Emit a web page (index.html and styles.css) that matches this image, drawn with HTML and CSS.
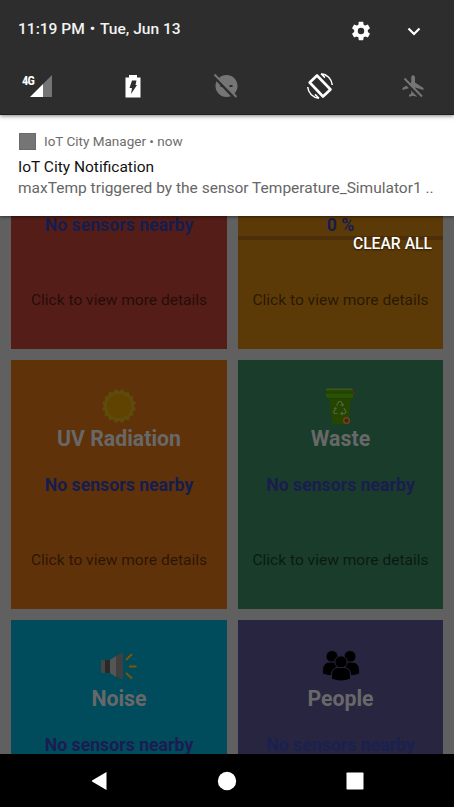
FILE: index.html
```html
<!DOCTYPE html>
<html lang="en">
<head>
<meta charset="utf-8">
<title>IoT City Manager</title>
<link rel="stylesheet" href="styles.css">
</head>
<body>
<div class="phone">
  <main class="app">
    <section class="card red">
      <div class="icon"></div><h2></h2>
      <p class="status"><span>No sensors nearby</span></p>
      <p class="more"><span>Click to view more details</span></p>
    </section>
    <section class="card amber">
      <div class="icon"></div><h2></h2>
      <p class="status"><span>0 %</span></p>
      <div class="rule"></div>
      <p class="more"><span>Click to view more details</span></p>
    </section>
    <section class="card orange">
      <div class="icon">
        <svg width="36" height="36" viewBox="-18 -18 36 36"><path fill="#5e4b0b" d="M3.4-17 6.4-13.2 9.6-14.4 11-10.2 14.5-9.6 13.8-5.8 17-3.4 15 0 17 3.4 13.8 5.8 14.5 9.6 11 10.2 9.6 14.4 6.4 13.2 3.4 17 0 14.8-3.4 17-6.4 13.2-9.6 14.4-11 10.2-14.5 9.6-13.8 5.8-17 3.4-15 0-17-3.4-13.8-5.8-14.5-9.6-11-10.2-9.6-14.4-6.4-13.2-3.4-17 0-14.8Z"/><circle r="12" fill="#604300"/></svg>
      </div>
      <h2><span>UV Radiation</span></h2>
      <p class="status"><span>No sensors nearby</span></p>
      <p class="more"><span>Click to view more details</span></p>
    </section>
    <section class="card green">
      <div class="icon">
        <svg width="36" height="36" viewBox="0 0 36 36"><path fill="#254600" d="M6 9h22l-2 24q0 3-3 3H12q-3 0-3-3Z"/><path fill="#2b5200" d="M3 4h27v6H5q-2 0-2-2Z"/><path fill="#405718" d="M4 .5h24q2 0 2 2H3q0-2 1-2Z"/><path fill="#254600" d="M3 2.500h27V5H3z"/><path fill="#1f3e00" d="M3 4.500h27v1H3zM6 10h22v1H6z"/><circle cx="31" cy="5" r="1.500" fill="#5a2911"/><g fill="none" stroke="#52633b" stroke-width="1.200"><path d="m13.500 17.500 2.500-4h2l2 4m-2.300-.6 2 .9.700-2M21 20l2 4-1 1.500h-4m1.500-1.500-1.500 1.500 1.500 1.500M14.500 25.500h-3l-.8-1.500 2-4m-1.700.6 1.700-.8.600 1.500"/></g><circle cx="23.500" cy="32.500" r="2.800" fill="#3f2512" stroke="#754019" stroke-width="1.600"/></svg>
      </div>
      <h2><span>Waste</span></h2>
      <p class="status"><span>No sensors nearby</span></p>
      <p class="more"><span>Click to view more details</span></p>
    </section>
    <section class="card cyan">
      <div class="icon">
        <svg width="36" height="36" viewBox="0 0 36 36"><path fill="#454545" d="M0 12h4v13H0z"/><path fill="#292929" d="M4 12h5v13H4z"/><path fill="#555" d="m9 12 6-4v21l-6-4Z"/><path fill="#3f3f3f" d="m15 8 7-4v28l-7-4Z"/><path d="m25 12 6-6M28 18.500h7.500M25 25l6 5.500" stroke="#805500" stroke-width="1.800"/></svg>
      </div>
      <h2><span>Noise</span></h2>
      <p class="status"><span>No sensors nearby</span></p>
    </section>
    <section class="card purple">
      <div class="icon">
        <svg width="36" height="36" viewBox="0 0 36 36"><g stroke="#282541" stroke-width="1"><circle cx="9" cy="8.500" r="6"/><circle cx="27" cy="8.500" r="6"/><path d="M-.5 26v-4Q0 14 7 14h7v14Q5 28-.5 26ZM36.500 26v-4Q36 14 29 14h-7v14q9 0 14.500-2Z"/><circle cx="18" cy="14" r="6.200"/><path d="M8.500 31v-4q0-7.500 7-7.500h5q7 0 7 7.500v4q-9.500 4-19 0Z"/></g></svg>
      </div>
      <h2><span>People</span></h2>
      <p class="status"><span>No sensors nearby</span></p>
    </section>
  </main>

  <aside class="shade">
    <header class="quick">
      <div class="top">
        <span class="clock">11:19 PM&nbsp;<i>•</i>&nbsp;Tue, Jun 13</span>
        <svg class="gear" width="22" height="22" viewBox="0 0 24 24"><path fill="#fff" d="M19.430 12.980c.04-.32.07-.64.07-.98s-.03-.66-.07-.98l2.110-1.650c.19-.15.24-.42.12-.64l-2-3.460c-.12-.22-.39-.3-.61-.22l-2.490 1c-.52-.4-1.080-.73-1.690-.98l-.38-2.650C14.460 2.180 14.250 2 14 2h-4c-.25 0-.46.18-.49.42l-.38 2.650c-.61.25-1.170.59-1.690.98l-2.490-1c-.23-.09-.49 0-.61.22l-2 3.460c-.13.22-.07.49.12.64l2.110 1.650c-.04.32-.07.65-.07.98s.03.66.07.98l-2.110 1.650c-.19.15-.24.42-.12.64l2 3.460c.12.22.39.3.61.22l2.490-1c.52.4 1.080.73 1.690.98l.38 2.650c.03.24.24.42.49.42h4c.25 0 .46-.18.49-.42l.38-2.650c.61-.25 1.170-.59 1.690-.98l2.490 1c.23.09.49 0 .61-.22l2-3.460c.12-.22.07-.49-.12-.64ZM12 15.500a3.500 3.500 0 1 1 0-7 3.500 3.500 0 0 1 0 7Z"/></svg>
        <svg class="chev" width="24" height="24" viewBox="0 0 24 24"><path d="m6.500 9.500 5.500 5.500 5.500-5.500" fill="none" stroke="#fff" stroke-width="2.200"/></svg>
      </div>
      <div class="tiles">
        <span class="signal"><b>4G</b><svg width="22" height="22" viewBox="0 0 22 22"><path fill="#fff" d="M0 22 13 9v13Z"/><path fill="#757575" d="m13 9 9-9v22h-9Z"/></svg></span>
        <svg width="28" height="28" viewBox="0 0 28 28"><path fill="#fff" d="M6.500 5.500H10V3h8v2.500h3.500v20h-15Z"/><path fill="#2d2d2d" d="M13 8.500h4.500l-1 4.500H18l-6 9 1-6h-2.500Z"/></svg>
        <svg width="28" height="28" viewBox="0 0 28 28"><circle cx="14.500" cy="14" r="11" fill="#757575"/><path fill="#2d2d2d" d="M8.500 13h3v2h-3zm9 0h3v2h-3z"/><path d="m2 4 21.500 22.500" stroke="#2d2d2d" stroke-width="3.500"/><path d="m2.500 2.500 22 22.500" stroke="#757575" stroke-width="2"/></svg>
        <svg width="28" height="28" viewBox="0 0 28 28"><g fill="none" stroke="#fff"><path stroke-width="2.600" stroke-linejoin="round" d="M3.700 10.500 11 3.500 24.500 17.500 17 24.500Z"/><path stroke-width="1.500" d="M15 1.800A12.300 12.300 0 0 1 26.300 13M13 26.200A12.300 12.300 0 0 1 1.700 15M15 1.800l4 3.800M13 26.200l-4-3.800"/></g></svg>
        <svg width="28" height="28" viewBox="0 0 28 28"><path fill="#757575" d="M24.500 18v-2L16 10.500V5.200a1.900 1.900 0 0 0-3.800 0v5.300L3.500 16v2l8.700-2.500v6L10 23v1.800l4-1 4 1V23l-2-1.500v-6Z"/><path d="m4.500 8.500 17 17.500" stroke="#2d2d2d" stroke-width="3"/><path d="M5.500 6.500 23 24.500" stroke="#757575" stroke-width="2"/></svg>
      </div>
    </header>
    <article class="note">
      <div class="source"><i></i><span>IoT City Manager&nbsp;•&nbsp;now</span></div>
      <h1><span>IoT City Notification</span></h1>
      <p><span>maxTemp triggered by the sensor Temperature_Simulator1 ..</span></p>
    </article>
    <div class="clear"><span>CLEAR ALL</span></div>
  </aside>

  <nav class="nav">
    <svg width="20" height="20" viewBox="0 0 20 20"><path fill="#fff" d="M3.400 9.200 17.500 1v18L3.400 10.800q-1.400-.8 0-1.600Z"/></svg>
    <svg width="20" height="20" viewBox="0 0 20 20"><circle cx="10" cy="10" r="9.200" fill="#fff"/></svg>
    <svg width="20" height="20" viewBox="0 0 20 20"><rect x="1.500" y="1.500" width="17" height="17" rx=".8" fill="#fff"/></svg>
  </nav>
</div>
</body>
</html>
```
FILE: styles.css
```css
* { box-sizing: border-box; }
body { margin: 0; font-family: Roboto, "Liberation Sans", sans-serif; }
h1, h2, p { margin: 0; font-weight: 400; white-space: nowrap; }
svg { display: block; overflow: visible; }

.phone { position: relative; width: 454px; height: 807px; overflow: hidden; background: #000; }

.app {
  height: 754px;
  overflow: hidden;
  padding: 100px 11px 0;
  background: #606060;
  display: grid;
  grid-template-columns: 216px 205px;
  grid-auto-rows: 249px;
  row-gap: 11px;
  column-gap: 11px;
}
.card { display: flex; flex-direction: column; align-items: center; height: 249px; }
.card .icon { height: 36px; margin-top: 28px; }
.card h2 { height: 30px; line-height: 30px; font-size: 21.300px; font-weight: 700; color: #686868; }
.card .status { height: 26px; line-height: 26px; margin-top: 18px; font-size: 17.700px; font-weight: 700; color: #161d4d; }
.card .more { line-height: 24px; margin-top: 50px; font-size: 15.550px; color: rgba(0, 0, 0, .58); }
.rule { width: 100%; height: 4px; margin: -2px 0; background: #4c2f08; }
.red { background: #541d17; }
.amber { background: #5c3a08; }
.orange { background: #60320a; }
.green { background: #193c2b; }
.cyan { background: #004c5d; }
.purple { background: #282541; }
.green .status, .cyan .status { color: #1b1d50; }
.purple .status { color: #1a2150; }

.shade { position: absolute; inset: 0 0 auto; }
.quick { position: relative; height: 115px; background: #2d2d2d; border-bottom: 1px solid #1f1f1f; box-shadow: 0 1px 4px rgba(0, 0, 0, .5); }
.top { display: flex; align-items: center; height: 61px; padding: 0 28px 0 18px; color: #f2f2f2; }
.clock { flex: 1; margin-top: -4px; font-size: 15.550px; font-weight: 500; }
.clock i { margin: 0 1px; font-style: normal; }
.gear { margin-right: 30px; }
.tiles { display: flex; justify-content: space-between; align-items: center; height: 49px; padding: 0 27px 0 22px; }
.signal { display: flex; align-items: flex-end; width: 30px; height: 22px; margin-right: 1px; }
.signal b { width: 8px; align-self: flex-start; font: 700 12.500px/11px "Roboto Condensed", Roboto, sans-serif; letter-spacing: -.8px; color: #fff; }

.note { height: 101px; padding: 16px 18px 0; background: #fff; box-shadow: 0 1px 3px rgba(0, 0, 0, .5); }
.source { display: flex; align-items: center; gap: 8px; height: 20px; font-size: 13.500px; color: #6d6d6d; white-space: nowrap; }
.source i { width: 17px; height: 17px; margin-left: 1px; background: #757575; border: 1px solid #6a6a6a; }
.note h1 { margin-top: 5px; line-height: 22px; font-size: 15.500px; color: #111; }
.note p { line-height: 21px; font-size: 15.500px; color: #666; }
.clear { padding: 17px 22px 0 0; text-align: right; font-size: 15.700px; font-weight: 500; line-height: 22px; color: #fff; text-shadow: 0 1px 2px rgba(0, 0, 0, .6); }

.nav { display: flex; justify-content: center; align-items: center; gap: 108px; height: 53px; background: #000; }
```
